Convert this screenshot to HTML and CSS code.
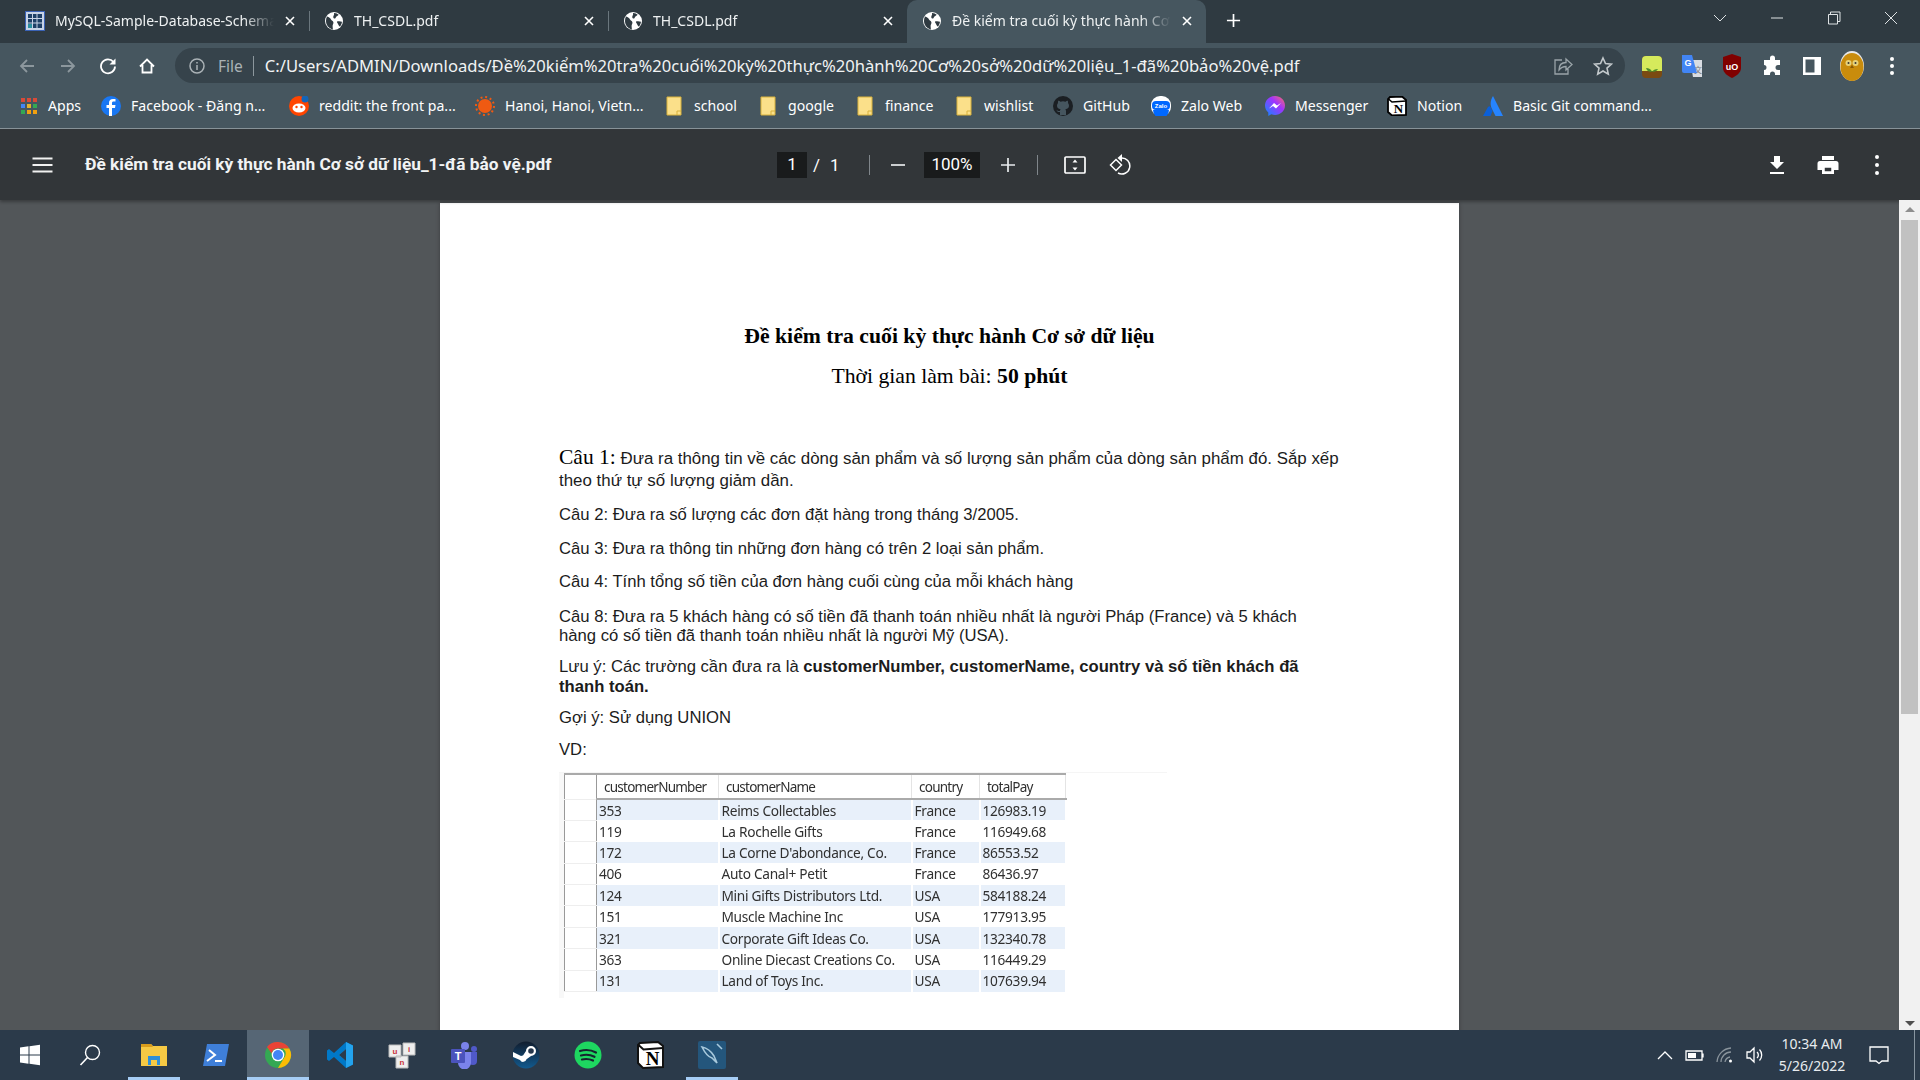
FILE: index.html
```html
<!DOCTYPE html>
<html lang="vi">
<head>
<meta charset="utf-8">
<title>Đề kiểm tra cuối kỳ thực hành Cơ sở dữ liệu</title>
<link rel="stylesheet" href="styles.css">
</head>
<body>
<svg class="defs" width="0" height="0">
  <symbol id="globe" viewBox="0 0 20 20"><circle cx="10" cy="10" r="9" fill="#fff"/><path d="M3 5.500c2 .5 3.500 1.500 4 3 .6 1.300 2 1.200 2.400 2.700.3 1.300-.8 2.200-.8 3.800 0 1 .3 2.500.3 3.500C5 17.500 2 14 2 10c0-1.700.3-3.200 1-4.500zM10.500 2c1.500.2 3 .8 4.200 1.800-.5.900-1.700 1.300-2.500 2-.7.600-.2 1.800-1.400 1.800-1 0-1.800-1-1.500-2.200.2-1.200 1.200-1.300.7-3.400zM13 10.500c1.500-.5 3.500-.5 5 .3-.2 1.800-.9 3.500-2 4.700-1-.2-1.500-1.500-2-2.500-.4-.9-1.300-1.800-1-2.500z" fill="#2f3a41"/></symbol>
  <symbol id="folder" viewBox="0 0 16 20"><path d="M1 1h14v18H1z" fill="#fbe08a" stroke="#d9b23c"/><path d="M11 19v-4h4" fill="none" stroke="#d9b23c"/></symbol>
</svg>

<header class="chrome">
  <div class="tabstrip">
    <div class="tab">
      <svg class="fav" viewBox="0 0 20 20"><rect x=".5" y=".5" width="19" height="19" fill="#c8d3e6" stroke="#3a62b5"/><path d="M3 3h14v14H3z" fill="#1d3f66"/><path d="M3 7.500h14M3 12h14M7.500 3v14M12 3v14" stroke="#c8d3e6"/><path d="M3 13h4v4H3z" fill="#2a8f9f"/></svg>
      <span class="tab-title">MySQL-Sample-Database-Schema</span>
      <svg class="tab-x" viewBox="0 0 10 10"><path d="M1 1l8 8M9 1l-8 8"/></svg>
    </div>
    <div class="tab tab-sep">
      <svg class="fav"><use href="#globe"/></svg>
      <span class="tab-title">TH_CSDL.pdf</span>
      <svg class="tab-x" viewBox="0 0 10 10"><path d="M1 1l8 8M9 1l-8 8"/></svg>
    </div>
    <div class="tab tab-sep">
      <svg class="fav"><use href="#globe"/></svg>
      <span class="tab-title">TH_CSDL.pdf</span>
      <svg class="tab-x" viewBox="0 0 10 10"><path d="M1 1l8 8M9 1l-8 8"/></svg>
    </div>
    <div class="tab tab-active">
      <svg class="fav"><use href="#globe"/></svg>
      <span class="tab-title">Đề kiểm tra cuối kỳ thực hành Cơ sở dữ liệu</span>
      <svg class="tab-x" viewBox="0 0 10 10"><path d="M1 1l8 8M9 1l-8 8"/></svg>
    </div>
    <svg class="newtab" viewBox="0 0 16 16"><path d="M8 1v14M1 8h14"/></svg>
    <div class="winctl">
      <svg class="win-btn" viewBox="0 0 14 14"><path d="M1 4l6 6 6-6"/></svg>
      <svg class="win-btn" viewBox="0 0 14 14"><path d="M1 7h12"/></svg>
      <svg class="win-btn" viewBox="0 0 14 14"><path d="M1.500 3.500h9v9.500h-9zM3.500 3.500V1h9.500v9.500h-2.500"/></svg>
      <svg class="win-btn" viewBox="0 0 14 14"><path d="M1 1l12 12M13 1L1 13"/></svg>
    </div>
  </div>

  <div class="toolbar">
    <div class="nav-btns">
      <svg class="nav dim" viewBox="0 0 18 18"><path d="M16 9H3M9 3L3 9l6 6"/></svg>
      <svg class="nav dim" viewBox="0 0 18 18"><path d="M2 9h13M9 3l6 6-6 6"/></svg>
      <svg class="nav" viewBox="0 0 18 18"><path d="M14.500 5A7 7 0 1 0 16 9.500"/><path class="solid" d="M16.500 1.500v6h-6z"/></svg>
      <svg class="nav" viewBox="0 0 18 18"><path d="M2 9.500L9 2.500l7 7M4.500 8v7.500h9V8"/></svg>
    </div>
    <div class="omni">
      <svg class="omni-info" viewBox="0 0 16 16"><circle cx="8" cy="8" r="7"/><path d="M8 7v5M8 4v1.500"/></svg>
      <span class="omni-file">File</span>
      <span class="omni-url">C:/Users/ADMIN/Downloads/Đề%20kiểm%20tra%20cuối%20kỳ%20thực%20hành%20Cơ%20sở%20dữ%20liệu_1-đã%20bảo%20vệ.pdf</span>
      <svg class="omni-act share" viewBox="0 0 20 20"><path d="M9 4H2v14h13v-5M6 14c0-5 3-7.500 7-7.500V3l6 5.500-6 5.500v-3.500c-3 0-5 1-7 3.500z"/></svg>
      <svg class="omni-act star" viewBox="0 0 20 20"><path d="M10 2l2.500 5.500 6 .6-4.500 4 1.300 6L10 15l-5.300 3.100 1.300-6-4.500-4 6-.6z"/></svg>
    </div>
    <div class="ext-row">
      <svg class="ext" viewBox="0 0 20 24"><rect y="2" width="20" height="22" rx="4" fill="#7a4a12"/><path d="M0 6a4 4 0 0 1 4-4h12a4 4 0 0 1 4 4v11H0z" fill="#d6ea5c"/><path d="M10 18c-1-3-3-4-6-4 1 3 3 4 6 4zm0 0c1-2 3-3 6-3-1 2-3 3-6 3z" fill="#4c8c2b"/></svg>
      <svg class="ext" viewBox="0 0 20 24"><path d="M8 6h12v17H11z" fill="#d9dde3"/><text x="12" y="19" class="ext-t gray">文</text><path d="M0 1h10l5 18H2a2 2 0 0 1-2-2z" fill="#4285f4"/><text x="2.500" y="12" class="ext-t">G</text></svg>
      <svg class="ext" viewBox="0 0 20 24"><path d="M10 0l9 3v11c0 5-5 8-9 10-4-2-9-5-9-10V3z" fill="#800000"/><text x="10" y="15.500" class="ext-t mid">uO</text></svg>
      <svg class="ext" viewBox="0 0 20 24"><path d="M8 4a2.500 2.500 0 0 1 5 0v2h5v5h-2a2.500 2.500 0 0 0 0 5h2v5h-5v-1a2.500 2.500 0 0 0-5 0v1H2v-5a2.500 2.500 0 0 0 0-5V6h6z" fill="#fff"/></svg>
      <svg class="ext" viewBox="0 0 20 24"><path d="M1 3h18v18H1z" fill="#fff"/><path d="M3.500 5.500h9v13h-9z" fill="#46565f"/></svg>
      <svg class="ext avatar" viewBox="0 0 24 30"><ellipse cx="12" cy="15" rx="12" ry="15" fill="#e8e8e8"/><ellipse cx="12" cy="16" rx="11.500" ry="14" fill="#c98c0c"/><circle cx="8.500" cy="12" r="3" fill="#e6d27a"/><circle cx="15.500" cy="12" r="3" fill="#e6d27a"/><circle cx="8.500" cy="12" r="1" fill="#333"/><circle cx="15.500" cy="12" r="1" fill="#333"/><path d="M12 14l-2 3h4z" fill="#8a5a05"/></svg>
      <svg class="ext" viewBox="0 0 20 24"><circle cx="10" cy="5" r="2" fill="#fff"/><circle cx="10" cy="12" r="2" fill="#fff"/><circle cx="10" cy="19" r="2" fill="#fff"/></svg>
    </div>
  </div>

  <nav class="bookmarks">
    <a class="bm"><svg class="bm-ic apps" viewBox="0 0 18 18"><path d="M1 1h4v4H1zM7 1h4v4H7zM13 1h4v4h-4z" fill="#d84a38"/><path d="M1 7h4v4H1z" fill="#4285f4"/><path d="M7 7h4v4H7z" fill="#e4b32c"/><path d="M13 7h4v4h-4z" fill="#34a853"/><path d="M1 13h4v4H1z" fill="#34a853"/><path d="M7 13h4v4H7zM13 13h4v4h-4z" fill="#f0a010"/></svg>Apps</a>
    <a class="bm"><svg class="bm-ic" viewBox="0 0 20 20"><circle cx="10" cy="10" r="10" fill="#1977f3"/><path d="M11 20v-8h3l.500-3H11V7c0-1 .5-1.500 1.500-1.500h2V3h-2.500C9.500 3 8 4.500 8 7v2H5.500v3H8v8z" fill="#fff"/></svg>Facebook - Đăng n...</a>
    <a class="bm"><svg class="bm-ic" viewBox="0 0 20 20"><circle cx="10" cy="10" r="10" fill="#ff4500"/><ellipse cx="10" cy="12" rx="6.500" ry="4.500" fill="#fff"/><circle cx="7.500" cy="11" r="1.200" fill="#ff4500"/><circle cx="12.500" cy="11" r="1.200" fill="#ff4500"/><circle cx="16" cy="3" r="3.500" fill="#1465b8"/></svg>reddit: the front pa...</a>
    <a class="bm"><svg class="bm-ic" viewBox="0 0 20 20"><circle cx="10" cy="10" r="7" fill="#ef5a12"/><circle cx="10" cy="10" r="9" fill="none" stroke="#ef5a12" stroke-width="2" stroke-dasharray="2 2.700"/></svg>Hanoi, Hanoi, Vietn...</a>
    <a class="bm"><svg class="bm-ic folder"><use href="#folder"/></svg>school</a>
    <a class="bm"><svg class="bm-ic folder"><use href="#folder"/></svg>google</a>
    <a class="bm"><svg class="bm-ic folder"><use href="#folder"/></svg>finance</a>
    <a class="bm"><svg class="bm-ic folder"><use href="#folder"/></svg>wishlist</a>
    <a class="bm"><svg class="bm-ic" viewBox="0 0 20 20"><circle cx="10" cy="10" r="10" fill="#1b1f23"/><path d="M7 19v-3c-2 .4-3-.5-3.500-2 1 .3 1.500 1.500 3.500 1 0-1 .3-1.300.7-1.700C5 13 4 11.500 4 9.500c0-1 .4-1.800 1-2.500-.2-.7-.1-1.600.2-2.300.9 0 1.800.5 2.400 1a8 8 0 0 1 4.800 0c.6-.5 1.500-1 2.400-1 .3.700.4 1.600.2 2.300.6.700 1 1.500 1 2.500 0 2-1 3.500-3.700 3.800.4.400.7 1 .7 1.700v4z" fill="#46565f"/></svg>GitHub</a>
    <a class="bm"><svg class="bm-ic" viewBox="0 0 20 20"><rect width="20" height="20" rx="9" fill="#fff"/><path d="M2 14a8 8 0 0 0 16 0z" fill="#0068ff"/><rect x="1" y="5" width="18" height="9" rx="4" fill="#0068ff"/><text x="10" y="12" class="zalo">Zalo</text></svg>Zalo Web</a>
    <a class="bm"><svg class="bm-ic" viewBox="0 0 20 20"><defs><linearGradient id="ms" x1="0" y1="1" x2="1" y2="0"><stop offset="0" stop-color="#0a8cff"/><stop offset=".6" stop-color="#a033ff"/><stop offset="1" stop-color="#ff6f61"/></linearGradient></defs><path d="M10 0C4.500 0 0 4 0 9.500c0 3 1.200 5.300 3.300 7V20l3-1.700c1.200.4 2.400.6 3.700.6 5.500 0 10-4 10-9.400S15.500 0 10 0z" fill="url(#ms)"/><path d="M4 12.500l5-5.500 3 2.500 4-2.500-5 5.500-3-2.500z" fill="#fff"/></svg>Messenger</a>
    <a class="bm"><svg class="bm-ic" viewBox="0 0 20 20"><path d="M3 1l12-.5L19 4v15l-14 .5L1 16V3z" fill="#fff" stroke="#000" stroke-width="1.800"/><path d="M1.500 3l3.500 3 14-1" fill="none" stroke="#000" stroke-width="1.500"/><text x="11.500" y="17" class="notion-n">N</text></svg>Notion</a>
    <a class="bm"><svg class="bm-ic" viewBox="0 0 20 20"><path d="M0 20l5-9c1-1 2-1 2.500 0l2 4-2 5z" fill="#0b5fd8"/><path d="M10 0c-3 5-3 9-1 13l3.500 7H20z" fill="#2684ff"/></svg>Basic Git command...</a>
  </nav>
</header>

<div class="pdfbar">
  <div class="pdf-left">
    <svg class="pdf-ic menu" viewBox="0 0 20 16"><path d="M0 1.500h20M0 8h20M0 14.500h20"/></svg>
    <span class="pdf-title">Đề kiểm tra cuối kỳ thực hành Cơ sở dữ liệu_1-đã bảo vệ.pdf</span>
  </div>
  <div class="pdf-mid">
    <span class="pdf-box page-box">1</span>
    <span class="pdf-slash">/</span>
    <span class="pdf-total">1</span>
    <span class="pdf-sep sep-a"></span>
    <svg class="pdf-ic zoomctl" viewBox="0 0 16 16"><path d="M1 8h14"/></svg>
    <span class="pdf-box zoom-box">100%</span>
    <svg class="pdf-ic zoomctl" viewBox="0 0 16 16"><path d="M1 8h14M8 1v14"/></svg>
    <span class="pdf-sep sep-b"></span>
    <svg class="pdf-ic fit" viewBox="0 0 22 18"><rect x="1" y="1" width="20" height="16" rx="1"/><path class="solid" d="M11 3.500l2.500 3h-5zM11 14.500l2.500-3h-5z"/></svg>
    <svg class="pdf-ic rot" viewBox="0 0 22 22"><path d="M12 4a8 8 0 1 1-3 15"/><path class="solid" d="M13 0v8L8.500 4z"/><path d="M1.500 11L7 5.500 12.500 11 7 16.500z"/></svg>
  </div>
  <div class="pdf-right">
    <svg class="pdf-ic dl" viewBox="0 0 16 20"><path class="solid" d="M5 1h6v6h4l-7 7-7-7h4zM1 17h14v2H1z"/></svg>
    <svg class="pdf-ic pr" viewBox="0 0 22 20"><path class="solid" d="M5 1h12v4H5zM3 6h16a2.500 2.500 0 0 1 2.500 2.500V15H17v4H5v-4H.5V8.500A2.500 2.500 0 0 1 3 6z"/><path class="hole" d="M7 12h8v5H7z"/></svg>
    <svg class="pdf-ic more" viewBox="0 0 6 20"><path class="solid" d="M3 0a2 2 0 1 1 0 4 2 2 0 0 1 0-4zM3 8a2 2 0 1 1 0 4 2 2 0 0 1 0-4zM3 16a2 2 0 1 1 0 4 2 2 0 0 1 0-4z"/></svg>
  </div>
</div>

<main class="viewer">
  <div class="canvas">
    <article class="page">
      <h1 class="doc-title">Đề kiểm tra cuối kỳ thực hành Cơ sở dữ liệu</h1>
      <p class="doc-time">Thời gian làm bài: <b>50 phút</b></p>
      <p class="q q1"><span class="q-lead">Câu 1:</span> Đưa ra thông tin về các dòng sản phẩm và số lượng sản phẩm của dòng sản phẩm đó. Sắp xếp<br>theo thứ tự số lượng giảm dần.</p>
      <p class="q q2">Câu 2: Đưa ra số lượng các đơn đặt hàng trong tháng 3/2005.</p>
      <p class="q q3">Câu 3: Đưa ra thông tin những đơn hàng có trên 2 loại sản phẩm.</p>
      <p class="q q4">Câu 4: Tính tổng số tiền của đơn hàng cuối cùng của mỗi khách hàng</p>
      <p class="q q8">Câu 8: Đưa ra 5 khách hàng có số tiền đã thanh toán nhiều nhất là người Pháp (France) và 5 khách<br>hàng có số tiền đã thanh toán nhiều nhất là người Mỹ (USA).</p>
      <p class="q qn">Lưu ý: Các trường cần đưa ra là <b>customerNumber, customerName, country và số tiền khách đã<br>thanh toán.</b></p>
      <p class="q qh">Gợi ý: Sử dụng UNION</p>
      <p class="q qv">VD:</p>
      <div class="shot">
        <table class="grid">
          <colgroup><col class="c0"><col class="c1"><col class="c2"><col class="c3"><col class="c4"></colgroup>
          <thead><tr><th></th><th>customerNumber</th><th>customerName</th><th>country</th><th>totalPay</th></tr></thead>
          <tbody>
            <tr><td></td><td>353</td><td>Reims Collectables</td><td>France</td><td>126983.19</td></tr>
            <tr><td></td><td>119</td><td>La Rochelle Gifts</td><td>France</td><td>116949.68</td></tr>
            <tr><td></td><td>172</td><td>La Corne D'abondance, Co.</td><td>France</td><td>86553.52</td></tr>
            <tr><td></td><td>406</td><td>Auto Canal+ Petit</td><td>France</td><td>86436.97</td></tr>
            <tr><td></td><td>124</td><td>Mini Gifts Distributors Ltd.</td><td>USA</td><td>584188.24</td></tr>
            <tr><td></td><td>151</td><td>Muscle Machine Inc</td><td>USA</td><td>177913.95</td></tr>
            <tr><td></td><td>321</td><td>Corporate Gift Ideas Co.</td><td>USA</td><td>132340.78</td></tr>
            <tr><td></td><td>363</td><td>Online Diecast Creations Co.</td><td>USA</td><td>116449.29</td></tr>
            <tr><td></td><td>131</td><td>Land of Toys Inc.</td><td>USA</td><td>107639.94</td></tr>
          </tbody>
        </table>
      </div>
    </article>
  </div>
  <aside class="scrollbar">
    <span class="arrow up"></span>
    <span class="thumb"></span>
    <span class="track"></span>
    <span class="arrow down"></span>
  </aside>
</main>

<footer class="taskbar">
  <div class="task-icons">
    <div class="task"><svg class="t-ic" viewBox="0 0 24 24"><path d="M2 4.500l8.500-1.200v8.200H2zM11.500 3.200L22 1.700v9.800H11.500zM2 12.500h8.500v8.200L2 19.500zM11.500 12.500H22v9.800l-10.500-1.500z" fill="#fff"/></svg></div>
    <div class="task search"><svg class="t-ic" viewBox="0 0 24 24"><circle cx="14.500" cy="9.500" r="7" fill="none" stroke="#fff" stroke-width="1.400"/><path d="M9.500 14.500L2.500 22" stroke="#fff" stroke-width="1.600"/></svg></div>
    <div class="task on"><svg class="t-ic big" viewBox="0 0 28 28"><path d="M1 3h10l2 2h14v20H1z" fill="#f6c944"/><path d="M1 3h10l2 3H1z" fill="#d99c1c"/><path d="M8 24V15h12v9h-3v-5h-6v5z" fill="#2f8fd8"/></svg></div>
    <div class="task"><svg class="t-ic big" viewBox="0 0 28 28"><path d="M5 3h22l-4 22H1z" fill="#3f7fd9"/><path d="M7 9l6 5-8 6" fill="none" stroke="#fff" stroke-width="2"/><path d="M13 20h7" stroke="#fff" stroke-width="2"/></svg></div>
    <div class="task active on"><svg class="t-ic big" viewBox="0 0 28 28"><circle cx="14" cy="14" r="13" fill="#34a853"/><path d="M14 1a13 13 0 0 1 11.300 6.500H14a6.500 6.500 0 0 0-6.300 5L3 6a13 13 0 0 1 11-5z" fill="#ea4335"/><path d="M25.300 7.500A13 13 0 0 1 14 27l5.700-9.500A6.500 6.500 0 0 0 19 7.500z" fill="#fbbc05"/><circle cx="14" cy="14" r="6.300" fill="#fff"/><circle cx="14" cy="14" r="5" fill="#4285f4"/></svg></div>
    <div class="task"><svg class="t-ic big" viewBox="0 0 28 28"><path d="M20 1l7 3.500v19L20 27 8 16l-5 4-2-1.500v-9L3 8l5 4z" fill="#0078c8"/><path d="M20 1l7 3.500v19L20 27zM20 8l-7 6 7 6z" fill="#23a3ee"/><path d="M20 8l-7 6 7 6z" fill="#2b3a4a"/></svg></div>
    <div class="task"><svg class="t-ic big" viewBox="0 0 28 28"><path d="M1 4h12v12H1z M15 2h12v12H15z M8 15h12v12H8z" fill="#eee" stroke="#bbb"/><text x="7" y="13" class="key">u</text><text x="21" y="11" class="key">i</text><text x="14" y="24" class="key">n</text></svg></div>
    <div class="task"><svg class="t-ic big" viewBox="0 0 28 28"><circle cx="15" cy="5" r="4" fill="#7b83eb"/><circle cx="24" cy="8" r="3" fill="#5059c9"/><path d="M19 11h8v9a4 4 0 0 1-8 0z" fill="#5059c9"/><path d="M8 11h13v11a6 6 0 0 1-13 0z" fill="#7b83eb"/><rect x="1" y="8" width="14" height="14" rx="1" fill="#4b53bc"/><text x="8" y="19" class="teams">T</text></svg></div>
    <div class="task"><svg class="t-ic big" viewBox="0 0 28 28"><defs><linearGradient id="st" x1="0" y1="0" x2="0" y2="1"><stop offset="0" stop-color="#111d2e"/><stop offset="1" stop-color="#125a8f"/></linearGradient></defs><circle cx="14" cy="14" r="13.500" fill="url(#st)"/><path d="M1 16l7 3a3.500 3.500 0 0 0 6.500-.8l4.500-3.200a5 5 0 1 0-5-5l-3 4.500a3.500 3.500 0 0 0-2 .5L1 11z" fill="#fff"/><circle cx="19" cy="10" r="2.800" fill="#26384d"/></svg></div>
    <div class="task"><svg class="t-ic big" viewBox="0 0 28 28"><circle cx="14" cy="14" r="13.500" fill="#1ed760"/><path d="M6 10c5-1.500 11-1.200 16 1.500M7 14.500c4.500-1.200 9.500-.8 13.500 1.300M8 18.500c3.800-.9 7.500-.6 11 1.100" fill="none" stroke="#17242f" stroke-width="2.200" stroke-linecap="round"/></svg></div>
    <div class="task"><svg class="t-ic big" viewBox="0 0 28 28"><path d="M4 2l18-1 5 4v21l-20 1-5-5V4z" fill="#fff" stroke="#111" stroke-width="2"/><path d="M2.500 4l5 4.500L27 7" fill="none" stroke="#111" stroke-width="2"/><text x="16.500" y="24" class="notion-big">N</text></svg></div>
    <div class="task on"><svg class="t-ic big" viewBox="0 0 28 28"><rect width="28" height="28" rx="2" fill="#24567c"/><path d="M4 6c5 1 9 4 12 9l3 7-5-5c-4-1-7-5-10-11zM19 3l5 5" fill="none" stroke="#a8c9dc" stroke-width="1.600"/></svg></div>
  </div>
  <div class="tray">
    <svg class="tray-ic" viewBox="0 0 20 20"><path d="M3 14l7-7 7 7"/></svg>
    <svg class="tray-ic" viewBox="0 0 20 20"><path d="M1 6h16v9H1zM18 8.500v4"/><path class="solid" d="M3 8h8v5H3z"/></svg>
    <svg class="tray-ic wifi" viewBox="0 0 20 20"><path d="M2 17A15 15 0 0 1 16 3M6 17a10 10 0 0 1 10-10M10 17a6 6 0 0 1 5-5"/><circle class="solid" cx="15.500" cy="16" r="1.500"/></svg>
    <svg class="tray-ic" viewBox="0 0 20 20"><path d="M2 7h3l4-4v14l-4-4H2zM12 7a4 4 0 0 1 0 6M14.500 4.500a8 8 0 0 1 0 11"/></svg>
    <div class="clock"><span>10:34 AM</span><span>5/26/2022</span></div>
    <svg class="tray-ic notif" viewBox="0 0 20 20"><path d="M1 2h18v14h-6l-3 2.500L7 16H1z"/></svg>
    <span class="show-desktop"></span>
  </div>
</footer>
</body>
</html>
```

FILE: styles.css
```css
* { box-sizing: border-box; }
html, body { margin: 0; height: 100%; }
body {
  width: 1920px; height: 1080px; overflow: hidden;
  display: flex; flex-direction: column;
  font-family: "Noto Sans", "Liberation Sans", sans-serif;
  background: #525659;
}
.defs { position: absolute; }
svg { display: block; flex: none; }

/* Tab strip */
.chrome { flex: none; color: #fff; }
.tabstrip { height: 43px; background: #2f3a41; display: flex; align-items: center; padding-left: 10px; }
.tab {
  width: 299px; height: 43px; flex: none;
  display: flex; align-items: center;
  padding: 0 14px 2px 15px; position: relative;
}
.tab-sep::before {
  content: ""; position: absolute; left: 0; top: 11px; height: 20px; width: 1px; background: #6a767d;
}
.tab-active { background: #46565f; border-radius: 10px 10px 0 0; }
.tab-active::before, .tab-active::after { content: none; }
.fav { width: 20px; height: 20px; }
.tab-title {
  flex: 1; margin-left: 10px; min-width: 0;
  font-size: 14px; color: #eef1f2; white-space: nowrap; overflow: hidden;
  -webkit-mask-image: linear-gradient(90deg, #000 86%, transparent 100%);
  mask-image: linear-gradient(90deg, #000 86%, transparent 100%);
}
.tab-x { width: 10px; height: 10px; margin-left: 11px; fill: none; stroke: #fff; stroke-width: 1.600; }
.newtab { width: 15px; height: 15px; margin: 0 0 2px 20px; fill: none; stroke: #fff; stroke-width: 1.800; }
.winctl { margin-left: auto; display: flex; align-items: center; padding: 0 22px 8px 0; gap: 43px; }
.win-btn { width: 14px; height: 14px; fill: none; stroke: #dfe3e5; stroke-width: 1; }

/* Toolbar */
.toolbar { height: 45px; background: #46565f; display: flex; align-items: flex-start; padding: 5px 8px 0 7px; }
.nav-btns { display: flex; width: 168px; flex: none; height: 35px; align-items: center; }
.nav { width: 18px; height: 18px; margin: 0 11px; fill: none; stroke: #fff; stroke-width: 1.800; }
.nav.dim { stroke: #8c979d; }
.nav:nth-child(2) { margin-left: 12px; }
.nav:nth-child(4) { margin-left: 10px; }
.solid { fill: currentColor; stroke: none; color: #fff; }
.omni {
  flex: 1; height: 35px; border-radius: 18px; background: #36434b;
  display: flex; align-items: center; padding: 0 10px 0 14px;
  font-size: 16.600px;
}
.omni-info { width: 16px; height: 16px; fill: none; stroke: #aab2b6; stroke-width: 1.500; }
.omni-file { margin-left: 13px; color: #aab2b6; padding-right: 10px; border-right: 1px solid #8c979d; line-height: 20px; font-size: 15.5px; }
.omni-url { margin-left: 11px; flex: 1; color: #f1f3f4; white-space: nowrap; overflow: hidden; margin-top: -1px; }
.omni-act { width: 20px; height: 20px; fill: none; stroke: #c2c8cb; stroke-width: 1.300; }
.share { margin-right: 20px; stroke: #9aa4a9; }
.star { margin-right: 2px; stroke-width: 1.600; }
.ext-row { display: flex; align-items: center; height: 35px; margin-left: 7px; }
.ext { width: 20px; height: 24px; margin: 0 10px; }
.avatar { width: 24px; height: 30px; margin: 0 8px; }
.ext-t { font: bold 9px "Liberation Sans", sans-serif; fill: #fff; }
.ext-t.gray { fill: #777; font: 8px "Noto Sans CJK SC", sans-serif; }
.ext-t.mid { text-anchor: middle; }

/* Bookmarks */
.bookmarks {
  height: 41px; background: #46565f; border-bottom: 1px solid #8a959b;
  display: grid; align-items: center; padding: 0 0 5px 20px;
  grid-template-columns: 81px 188px 186px 191px 94px 97px 99px 97px 98px 114px 122px 96px 1fr;
  font-size: 14.100px;
}
.bm { display: flex; align-items: center; white-space: nowrap; color: #fff; }
.bm-ic { width: 20px; height: 20px; margin-right: 10px; }
.apps { width: 18px; height: 18px; margin-right: 10px; }
.folder { width: 16px; height: 20px; margin-right: 12px; }
.zalo { font: bold 6px "Liberation Sans", sans-serif; fill: #fff; text-anchor: middle; }
.notion-n { font: bold 13px "Liberation Serif", serif; fill: #000; text-anchor: middle; }

/* PDF bar */
.pdfbar {
  flex: none; height: 71px; background: #323639; color: #fff;
  display: flex; align-items: center; position: relative; z-index: 2;
  box-shadow: 0 2px 3px rgba(0,0,0,.3);
}
.pdf-left { display: flex; align-items: center; width: 777px; flex: none; padding-left: 32px; }
.pdf-ic { fill: none; stroke: #fff; stroke-width: 2; }
.menu { width: 21px; height: 16px; stroke: #f1f1f1; }
.pdf-title { margin-left: 32px; font: 700 17.300px Roboto, sans-serif; white-space: nowrap; color: #f1f3f4; margin-top: -1px; }
.pdf-mid { display: flex; align-items: center; font: 17px Roboto, sans-serif; }
.pdf-box { background: #191b1c; height: 26px; line-height: 25px; text-align: center; }
.page-box { width: 30px; }
.pdf-slash { margin-left: 6px; width: 10px; }
.pdf-total { margin-left: 7px; width: 9px; }
.pdf-sep { width: 1px; height: 20px; background: #80868b; }
.sep-a { margin-left: 30px; }
.sep-b { margin-left: 21px; }
.zoomctl { width: 16px; height: 16px; stroke-width: 1.700; stroke: #e8eaed; margin-left: 20px; }
.zoom-box { width: 56px; margin-left: 18px; }
.zoom-box + .zoomctl { margin-left: 20px; }
.fit { width: 22px; height: 18px; margin-left: 26px; stroke-width: 1.700; }
.rot { width: 22px; height: 22px; margin-left: 23px; stroke-width: 1.500; }
.pdf-right { margin-left: auto; display: flex; align-items: center; padding-right: 40px; }
.dl { width: 16px; height: 20px; }
.pr { width: 22px; height: 20px; margin-left: 32px; }
.more { width: 6px; height: 20px; margin-left: 35px; }
.hole { fill: #323639; stroke: #fff; stroke-width: 1.500; }

/* Viewer */
.viewer { flex: 1; min-height: 0; display: flex; overflow: hidden; background: #525659; }
.canvas { flex: 1; min-width: 0; display: flex; justify-content: center; padding-top: 3px; overflow: hidden; }
.page {
  width: 1019px; flex: none; background: #fff; color: #111;
  padding: 121px 0 0 119px; height: 900px;
  font-family: "Liberation Sans", sans-serif;
  box-shadow: 0 0 4px rgba(0,0,0,.3);
}
.doc-title, .doc-time { font-family: "Liberation Serif", serif; color: #000; text-align: center; margin: 0; padding-right: 119px; }
.doc-title { font-size: 21.700px; line-height: 24px; font-weight: bold; }
.doc-time { font-size: 21.700px; line-height: 28px; margin-top: 14px; }
.q { margin: 0; font-size: 16.670px; white-space: nowrap; color: #1c1c1c; }
.q-lead { font-family: "Liberation Serif", serif; font-size: 21.500px; color: #000; }
.q1 { margin-top: 56px; line-height: 22px; font-size: 16.900px; }
.q2 { margin-top: 12px; line-height: 22px; }
.q3 { margin-top: 12px; line-height: 22px; }
.q4 { margin-top: 11px; line-height: 22px; }
.q8 { margin-top: 14px; line-height: 19px; }
.qn { margin-top: 12px; line-height: 20px; }
.qh { margin-top: 10px; line-height: 22px; }
.qv { margin-top: 10px; line-height: 22px; }

.shot {
  margin-top: 11px; width: 608px; height: 226px; background: #fff;
  border-top: 1px solid #f5f5f5;
  padding: 0 0 0 5px;
  filter: blur(.35px);
  position: relative;
}
.shot::before { content: ""; position: absolute; left: 0; top: 0; width: 5px; height: 100%; background: #f8f8f8; }
.grid {
  border-collapse: collapse; table-layout: fixed; width: 501px;
  font: 13.700px "Noto Sans", sans-serif; color: #303030; letter-spacing: -.3px;
  border-top: 2px solid #aaa; position: relative;
}
.c0 { width: 32px; } .c1 { width: 122px; } .c2 { width: 193px; } .c3 { width: 68px; } .c4 { width: 86px; }
.grid th {
  height: 25px; padding: 0 0 0 7px; font-weight: 400; font-size: 13.500px; letter-spacing: -.75px; text-align: left; background: #fff;
  border-bottom: 2px solid #aaa; border-right: 1px solid #e4e4e4; white-space: nowrap;
}
.grid td { height: 21.400px; padding: 1px 0 0 2px; white-space: nowrap; border-right: 2px solid #fff; line-height: 16px; }
.grid tbody tr:nth-child(odd) td { background: #e8f0fa; }
.grid th:first-child, .grid td:first-child { border-left: 1px solid #999; border-right: 1px solid #999; background: #fff !important; border-bottom: 1px solid #eee; }

/* Scrollbar */
.scrollbar { width: 21px; flex: none; background: #f1f1f1; display: flex; flex-direction: column; align-items: center; margin-top: -1px; position: relative; z-index: 3; }
.arrow { width: 0; height: 0; border-left: 5px solid transparent; border-right: 5px solid transparent; flex: none; }
.up { border-bottom: 5px solid #8f8f8f; margin: 8px 0 8px; }
.down { border-top: 5px solid #505050; margin: 0 0 4px; }
.thumb { width: 17px; height: 494px; background: #c1c1c1; flex: none; }
.track { flex: 1; }

/* Taskbar */
.taskbar { flex: none; height: 50px; background: #2b3a4a; display: flex; align-items: stretch; color: #fff; position: relative; z-index: 4; }
.task-icons { display: flex; margin-left: -1px; }
.task { width: 62px; display: flex; align-items: center; justify-content: center; position: relative; }
.task.search { padding-right: 4px; }
.task.active { background: #566675; }
.task.on::after { content: ""; position: absolute; left: 5px; right: 5px; bottom: 0; height: 3px; background: #a6cdf5; }
.task.active::after { left: 0; right: 0; }
.t-ic { width: 24px; height: 24px; }
.t-ic.big { width: 28px; height: 28px; }
.key { font: bold 8px "Liberation Sans", sans-serif; fill: #c8323c; text-anchor: middle; }
.teams { font: bold 11px "Liberation Sans", sans-serif; fill: #fff; text-anchor: middle; }
.notion-big { font: bold 19px "Liberation Serif", serif; fill: #000; text-anchor: middle; }
.tray { margin-left: auto; display: flex; align-items: center; }
.tray-ic { width: 20px; height: 20px; margin: 0 5px; fill: none; stroke: #fff; stroke-width: 1.300; }
.tray-ic.wifi { stroke: #8a949c; }
.clock { width: 86px; margin-left: -1px; display: flex; flex-direction: column; align-items: center; font-size: 14px; line-height: 22px; color: #e8ecef; }
.notif { margin: 0 14px 0 14px; width: 20px; }
.show-desktop { width: 6px; height: 100%; border-left: 1px solid #8895a0; margin-left: 11px; }
```
